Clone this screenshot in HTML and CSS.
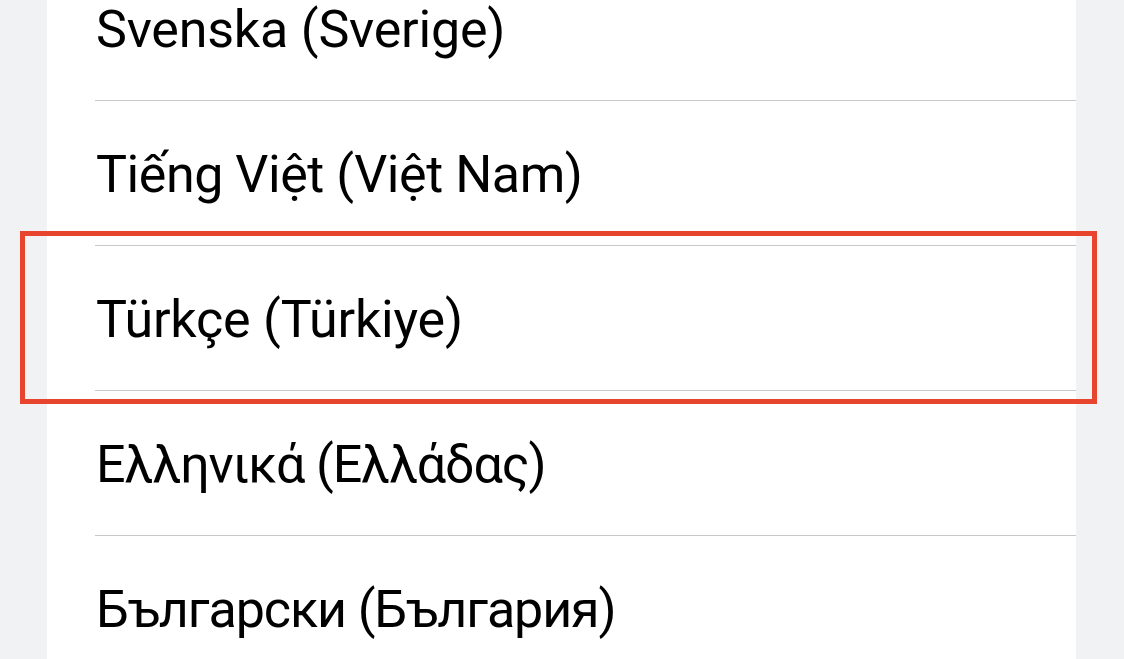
FILE: index.html
```html
<!DOCTYPE html>
<html lang="en">
<head>
<meta charset="utf-8">
<title>Languages</title>
<link rel="stylesheet" href="styles.css">
</head>
<body>
<div class="page">
  <ul class="list">
    <li class="row"><span class="label" lang="sv">Svenska (Sverige)</span></li>
    <li class="row"><span class="label" lang="vi">Tiếng Việt (Việt Nam)</span></li>
    <li class="row row-highlight"><span class="label" lang="tr">Türkçe (Türkiye)</span><span class="highlight"></span></li>
    <li class="row"><span class="label" lang="el">Ελληνικά (Ελλάδας)</span></li>
    <li class="row"><span class="label" lang="bg">Български (България)</span></li>
  </ul>
</div>
</body>
</html>
```
FILE: styles.css
```css
html, body {
  margin: 0;
  padding: 0;
  background: #f1f2f4;
  height: 100%;
  overflow: hidden;
}
.page {
  padding-left: 47px;
  width: 1029px;
}
.list {
  list-style: none;
  margin: -44px 0 0 0;
  padding: 0 0 0 48px;
  background: #ffffff;
}
.row {
  position: relative;
  height: 144px;
  border-bottom: 1px solid #c8c8cc;
  display: flex;
  align-items: center;
}
.label {
  font-family: Roboto, "Liberation Sans", Arial, sans-serif;
  font-size: 52px;
  color: #000;
  padding-left: 1px;
  padding-top: 2px;
  letter-spacing: -0.2px;
}
.label:lang(vi) {
  letter-spacing: -0.45px;
}
.label:lang(el) {
  letter-spacing: -1.15px;
}
.label:lang(bg) {
  letter-spacing: -1.1px;
}
.highlight {
  position: absolute;
  left: -75px;
  top: -15px;
  width: 1067px;
  height: 163px;
  border: 5px solid #e8452f;
  pointer-events: none;
}
```
